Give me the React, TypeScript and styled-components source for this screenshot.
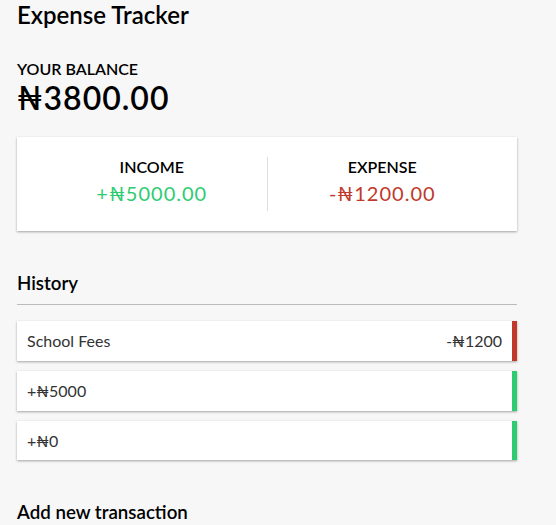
import React from "react";
import styled, { createGlobalStyle } from "styled-components";

const GlobalStyle = createGlobalStyle`
  * { box-sizing: border-box; }
  body {
    margin: 0;
    background-color: #f7f7f7;
    font-family: Lato, "Noto Sans", "DejaVu Sans", sans-serif;
  }
`;

const Page = styled.div`
  padding-left: 17px;
  display: flow-root;
`;

const Title = styled.h2`
  font-size: 24px;
  font-weight: 600;
  margin: 0 0 20px;
`;

const Container = styled.div`
  width: 500px;
  margin: 30px 0;
`;

const Label = styled.h4`
  margin: 0;
  font-size: 16px;
  font-weight: 600;
  text-transform: uppercase;
`;

const Balance = styled.h1`
  margin: 0;
  font-size: 32px;
  font-weight: 600;
  letter-spacing: 1px;
  line-height: 1.23;
`;

const Summary = styled.div`
  background-color: #fff;
  box-shadow: 0 1px 3px rgba(0, 0, 0, 0.12), 0 1px 2px rgba(0, 0, 0, 0.24);
  padding: 20px;
  display: flex;
  justify-content: space-between;
  margin: 20px 0 21px;
`;

const SummaryCol = styled.div<{ $divider?: boolean }>`
  flex: 1;
  text-align: center;
  border-right: ${(p) => (p.$divider ? "1px solid #dedede" : "none")};
`;

const Money = styled.p<{ $kind: "plus" | "minus" }>`
  font-size: 20px;
  letter-spacing: 1px;
  line-height: 1.25;
  margin: 5px 0;
  color: ${(p) => (p.$kind === "plus" ? "#2ecc71" : "#c0392b")};
`;

const SectionTitle = styled.h3`
  font-size: 18.72px;
  font-weight: 600;
  border-bottom: 1px solid #bbb;
  padding-bottom: 10px;
  margin: 41px 0 10px;
`;

const List = styled.ul`
  list-style-type: none;
  padding: 0;
  margin: 16px 0 40px;
`;

const Item = styled.li<{ $kind: "plus" | "minus" }>`
  background-color: #fff;
  box-shadow: 0 1px 3px rgba(0, 0, 0, 0.12), 0 1px 2px rgba(0, 0, 0, 0.24);
  color: #333;
  display: flex;
  justify-content: space-between;
  position: relative;
  padding: 10px;
  margin: 10px 0;
  font-size: 16px;
  line-height: 1.23;
  border-right: 5px solid ${(p) => (p.$kind === "plus" ? "#2ecc71" : "#c0392b")};
`;

const transactions = [
  { id: 1, text: "School Fees", amount: -1200 },
  { id: 2, text: "", amount: 5000 },
  { id: 3, text: "", amount: 0 },
];

export default function App() {
  const income = 5000;
  const expense = 1200;
  const total = income - expense;
  return (
    <>
      <GlobalStyle />
      <Page>
        <Title>Expense Tracker</Title>
        <Container>
          <Label>Your Balance</Label>
          <Balance>₦{total.toFixed(2)}</Balance>
          <Summary>
            <SummaryCol $divider>
              <Label>Income</Label>
              <Money $kind="plus">+₦{income.toFixed(2)}</Money>
            </SummaryCol>
            <SummaryCol>
              <Label>Expense</Label>
              <Money $kind="minus">-₦{expense.toFixed(2)}</Money>
            </SummaryCol>
          </Summary>
          <SectionTitle>History</SectionTitle>
          <List>
            {transactions.map((t) => {
              const sign = t.amount < 0 ? "-" : "+";
              return (
                <Item key={t.id} $kind={t.amount < 0 ? "minus" : "plus"}>
                  {t.text}
                  <span>
                    {sign}₦{Math.abs(t.amount)}
                  </span>
                </Item>
              );
            })}
          </List>
          <SectionTitle>Add new transaction</SectionTitle>
        </Container>
      </Page>
    </>
  );
}
